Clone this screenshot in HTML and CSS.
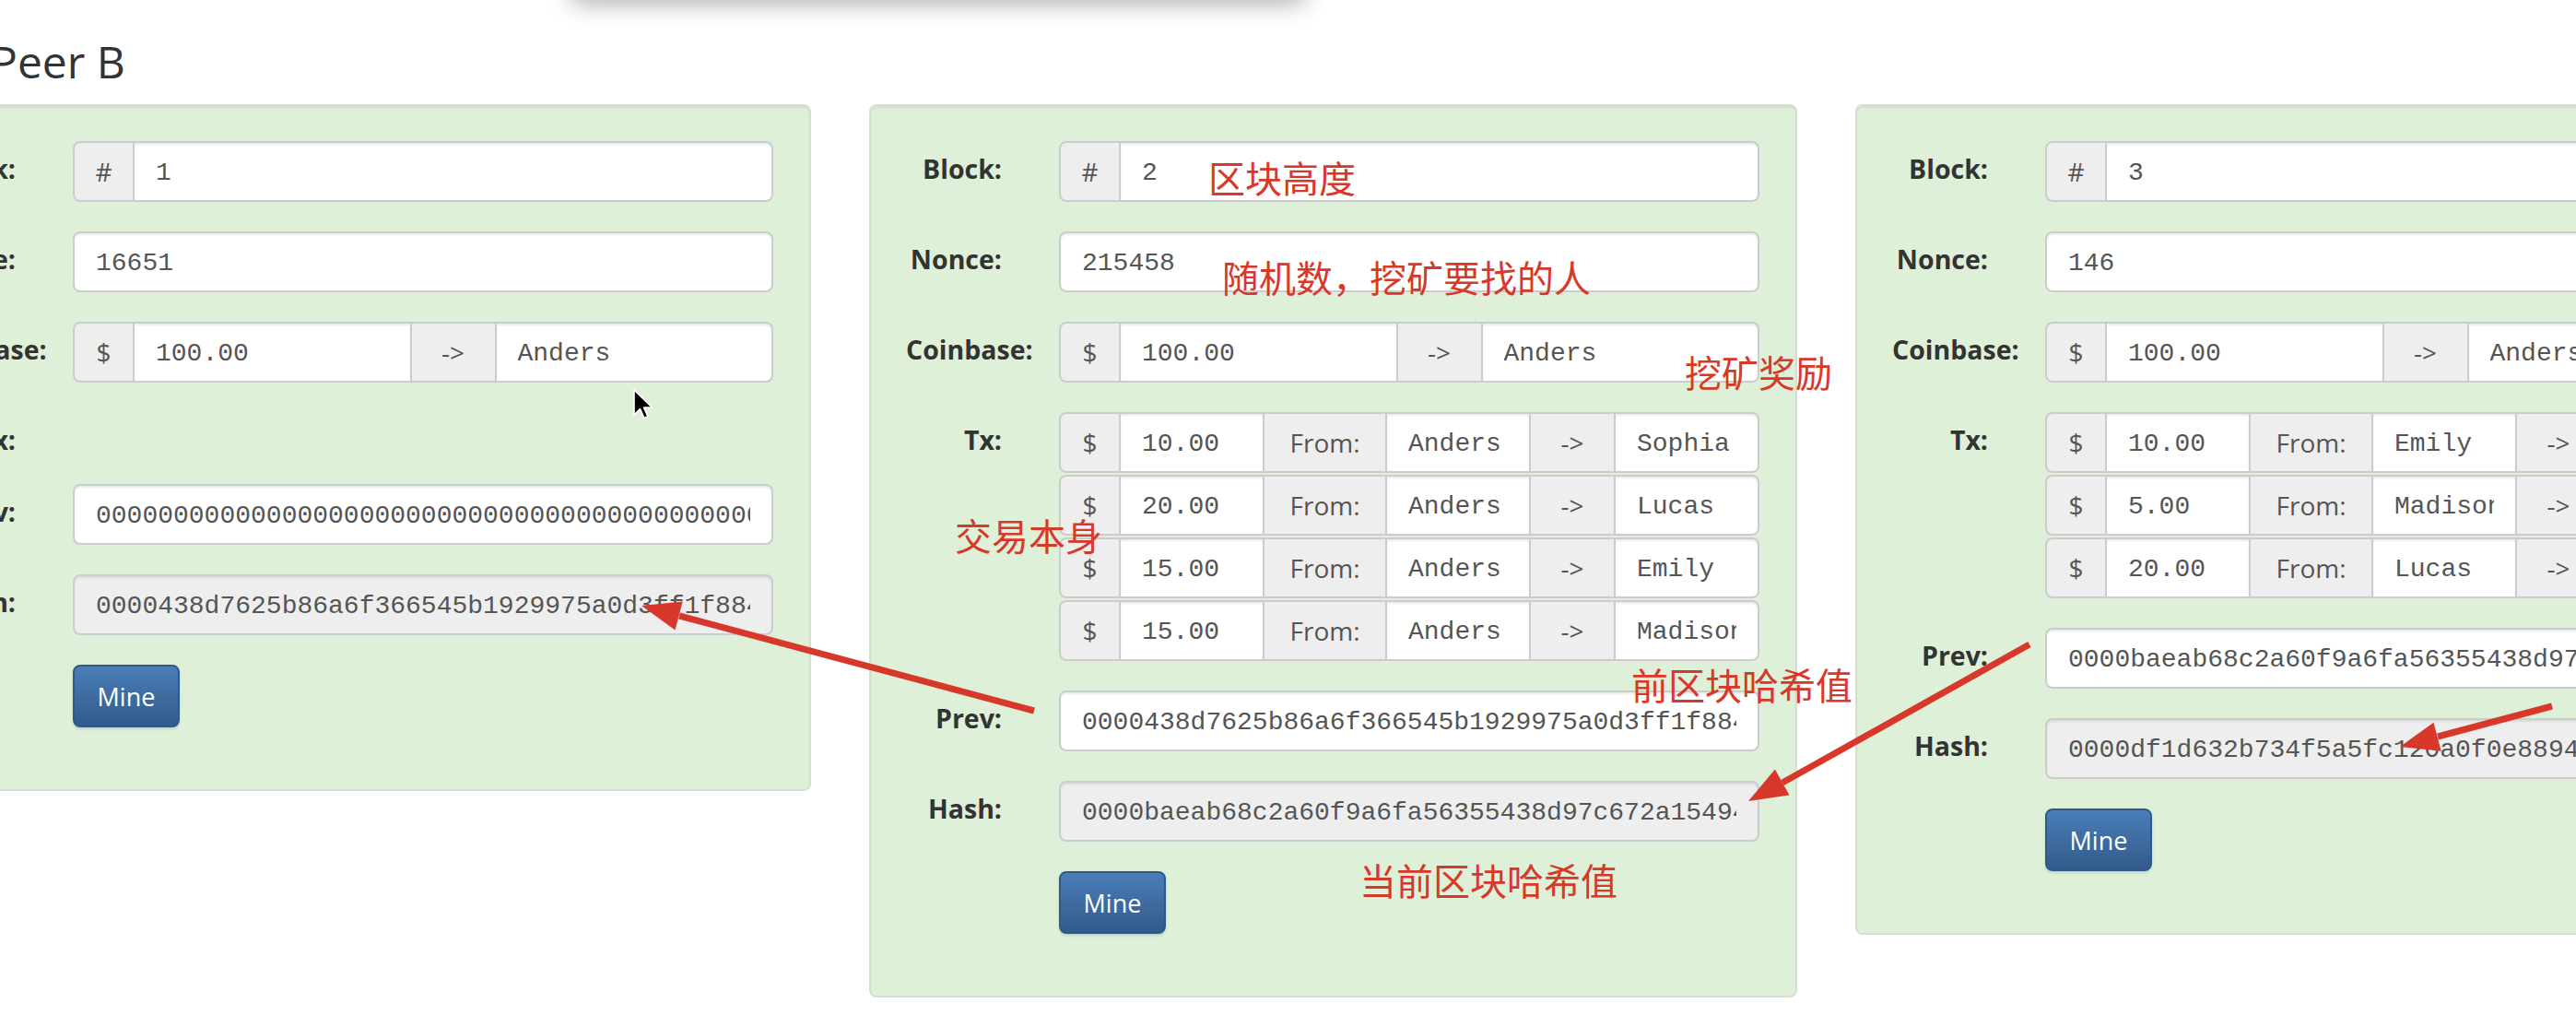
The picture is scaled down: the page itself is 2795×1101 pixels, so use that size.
FILE: index.html
```html
<!DOCTYPE html>
<html lang="zh">
<head>
<meta charset="utf-8">
<title>Peer B</title>
<link rel="stylesheet" href="styles.css">
</head>
<body>
<div class="popup-shadow"></div>
<div class="page">
  <h3 class="peer-title">Peer B</h3>
  <div class="blocks">
    <!-- Block 1 -->
    <div class="well">
      <div class="row"><div class="label">Block:</div>
        <div class="group"><span class="addon sym">#</span><input class="field" value="1" readonly></div></div>
      <div class="row"><div class="label">Nonce:</div>
        <div class="group"><input class="field single" value="16651" readonly></div></div>
      <div class="row"><div class="label">Coinbase:</div>
        <div class="group"><span class="addon sym">$</span><input class="field" value="100.00" readonly><span class="addon to">-&gt;</span><input class="field" value="Anders" readonly></div></div>
      <div class="row"><div class="label">Tx:</div><div class="txs"></div></div>
      <div class="row"><div class="label">Prev:</div>
        <div class="group"><input class="field single" value="0000000000000000000000000000000000000000000000000000000000000000" readonly></div></div>
      <div class="row"><div class="label">Hash:</div>
        <div class="group"><input class="field single ro" value="0000438d7625b86a6f366545b1929975a0d3ff1f8844d5c3e1a2b9f07d6c4e85" readonly></div></div>
      <div class="row"><div></div><div><button class="btn">Mine</button></div></div>
    </div>
    <!-- Block 2 -->
    <div class="well">
      <div class="row"><div class="label">Block:</div>
        <div class="group"><span class="addon sym">#</span><input class="field" value="2" readonly></div></div>
      <div class="row"><div class="label">Nonce:</div>
        <div class="group"><input class="field single" value="215458" readonly></div></div>
      <div class="row"><div class="label">Coinbase:</div>
        <div class="group"><span class="addon sym">$</span><input class="field" value="100.00" readonly><span class="addon to">-&gt;</span><input class="field" value="Anders" readonly></div></div>
      <div class="row"><div class="label">Tx:</div>
        <div class="txs">
          <div class="group"><span class="addon sym">$</span><input class="field" value="10.00" readonly><span class="addon from">From:</span><input class="field" value="Anders" readonly><span class="addon to">-&gt;</span><input class="field" value="Sophia" readonly></div>
          <div class="group"><span class="addon sym">$</span><input class="field" value="20.00" readonly><span class="addon from">From:</span><input class="field" value="Anders" readonly><span class="addon to">-&gt;</span><input class="field" value="Lucas" readonly></div>
          <div class="group"><span class="addon sym">$</span><input class="field" value="15.00" readonly><span class="addon from">From:</span><input class="field" value="Anders" readonly><span class="addon to">-&gt;</span><input class="field" value="Emily" readonly></div>
          <div class="group"><span class="addon sym">$</span><input class="field" value="15.00" readonly><span class="addon from">From:</span><input class="field" value="Anders" readonly><span class="addon to">-&gt;</span><input class="field" value="Madison" readonly></div>
        </div></div>
      <div class="row"><div class="label">Prev:</div>
        <div class="group"><input class="field single" value="0000438d7625b86a6f366545b1929975a0d3ff1f8844d5c3e1a2b9f07d6c4e85" readonly></div></div>
      <div class="row"><div class="label">Hash:</div>
        <div class="group"><input class="field single ro" value="0000baeab68c2a60f9a6fa56355438d97c672a15494e0d2b8f1c6a3e7d905b2f" readonly></div></div>
      <div class="row"><div></div><div><button class="btn">Mine</button></div></div>
    </div>
    <!-- Block 3 -->
    <div class="well">
      <div class="row"><div class="label">Block:</div>
        <div class="group"><span class="addon sym">#</span><input class="field" value="3" readonly></div></div>
      <div class="row"><div class="label">Nonce:</div>
        <div class="group"><input class="field single" value="146" readonly></div></div>
      <div class="row"><div class="label">Coinbase:</div>
        <div class="group"><span class="addon sym">$</span><input class="field" value="100.00" readonly><span class="addon to">-&gt;</span><input class="field" value="Anders" readonly></div></div>
      <div class="row"><div class="label">Tx:</div>
        <div class="txs">
          <div class="group"><span class="addon sym">$</span><input class="field" value="10.00" readonly><span class="addon from">From:</span><input class="field" value="Emily" readonly><span class="addon to">-&gt;</span><input class="field" value="Jackson" readonly></div>
          <div class="group"><span class="addon sym">$</span><input class="field" value="5.00" readonly><span class="addon from">From:</span><input class="field" value="Madison" readonly><span class="addon to">-&gt;</span><input class="field" value="Jackson" readonly></div>
          <div class="group"><span class="addon sym">$</span><input class="field" value="20.00" readonly><span class="addon from">From:</span><input class="field" value="Lucas" readonly><span class="addon to">-&gt;</span><input class="field" value="Grace" readonly></div>
        </div></div>
      <div class="row"><div class="label">Prev:</div>
        <div class="group"><input class="field single" value="0000baeab68c2a60f9a6fa56355438d97c672a15494e0d2b8f1c6a3e7d905b2f" readonly></div></div>
      <div class="row"><div class="label">Hash:</div>
        <div class="group"><input class="field single ro" value="0000df1d632b734f5a5fc120a0f0e88943b7c2d61e5f0a9d8c4b2e71f6a3d059" readonly></div></div>
      <div class="row"><div></div><div><button class="btn">Mine</button></div></div>
    </div>
  </div>
</div>

<div class="notes">
  <span class="note n1">区块高度</span>
  <span class="note n2">随机数，挖矿要找的人</span>
  <span class="note n3">挖矿奖励</span>
  <span class="note n4">交易本身</span>
  <span class="note n5">前区块哈希值</span>
  <span class="note n6">当前区块哈希值</span>
  <svg class="arrows" width="2795" height="1101" viewBox="0 0 2795 1101">
    <g stroke="#d7382a" stroke-width="7" fill="none">
      <line x1="1122" y1="771" x2="737" y2="668"/>
      <line x1="2202" y1="699" x2="1934" y2="849"/>
      <line x1="2769" y1="766" x2="2645" y2="799"/>
    </g>
    <g fill="#d7382a">
      <polygon points="696,657 740.7,652.4 732.5,683.4"/>
      <polygon points="1897,869 1941.5,862.6 1925.9,834.6"/>
      <polygon points="2604,810 2648.7,814.7 2640.5,783.7"/>
    </g>
  </svg>
  <svg class="cursor" width="24" height="36" viewBox="0 0 24 36">
    <path d="M2 2 L2 29 L8.5 22.5 L13 32.5 L17 30.8 L12.6 21 L21.5 21 Z" fill="#000" stroke="#fff" stroke-width="1.6" stroke-linejoin="round"/>
  </svg>
</div>
</body>
</html>
```

FILE: styles.css
```css
html, body {
  margin: 0;
  padding: 0;
  overflow: hidden;
  background: #ffffff;
}

body {
  width: 2795px;
  height: 1101px;
  position: relative;
  font-family: "Open Sans", "Liberation Sans", sans-serif;
  color: #333333;
}

.popup-shadow {
  position: absolute;
  left: 618px;
  top: -140px;
  width: 800px;
  height: 138px;
  border-radius: 14px;
  background: #ffffff;
  box-shadow: 0 6px 26px rgba(0, 0, 0, 0.32);
}

.page {
  margin-left: -127px;
  padding-top: 40px;
}

.peer-title {
  margin: 0 0 20px 117px;
  font-size: 48px;
  font-weight: 400;
  line-height: 53px;
  color: #333333;
}

.blocks {
  display: flex;
  gap: 63px;
  align-items: flex-start;
}

.well {
  flex: 0 0 1007px;
  box-sizing: border-box;
  background: #dff0d8;
  border: 2px solid #d2e2ca;
  border-radius: 8px;
  box-shadow: inset 0 2px 2px rgba(0, 0, 0, 0.07);
  padding: 38px 39px 67px 38px;
  display: flex;
  flex-direction: column;
  gap: 32px;
}

.row {
  display: grid;
  grid-template-columns: 104px 760px;
  column-gap: 62px;
  align-items: start;
}

.label {
  min-width: 0;
  text-align: right;
  white-space: nowrap;
  font-weight: 700;
  font-size: 28.5px;
  line-height: 32px;
  padding-top: 14px;
  color: #333333;
}

.txs {
  display: flex;
  flex-direction: column;
  gap: 2px;
}

.group {
  display: flex;
  height: 66px;
}

.addon,
.field {
  box-sizing: border-box;
  height: 66px;
  margin: 0;
  border: 2px solid #cccccc;
}

.group > * + * {
  border-left: 0;
}

.group > :first-child {
  border-radius: 8px 0 0 8px;
}

.group > :last-child {
  border-radius: 0 8px 8px 0;
}

.group > .single {
  border-radius: 8px;
}

.addon {
  flex: none;
  display: flex;
  align-items: center;
  justify-content: center;
  background: #eeeeee;
  color: #555555;
  font-family: "Open Sans", "Liberation Sans", sans-serif;
  font-size: 28px;
}

.addon.sym {
  width: 67px;
}

.addon.from {
  width: 133px;
}

.addon.to {
  width: 92px;
}

.field {
  flex: 1 1 0;
  width: 0;
  min-width: 0;
  padding: 2px 23px 0;
  background: #ffffff;
  color: #555555;
  font-family: "Liberation Mono", "Courier New", monospace;
  font-size: 28px;
  box-shadow: inset 0 2px 2px rgba(0, 0, 0, 0.075);
  outline: none;
}

.field.ro {
  background: #eeeeee;
}

.btn {
  display: block;
  width: 116px;
  height: 68px;
  box-sizing: border-box;
  margin: 0;
  padding: 0;
  border: 2px solid #2c5a8b;
  border-radius: 8px;
  background: linear-gradient(#4a7eb9, #325a8b);
  color: #ffffff;
  font-family: "Open Sans", "Liberation Sans", sans-serif;
  font-size: 27px;
  box-shadow: 0 2px 3px rgba(0, 0, 0, 0.12);
}

.notes {
  position: absolute;
  left: 0;
  top: 0;
  width: 2795px;
  height: 1101px;
  pointer-events: none;
}

.note {
  position: absolute;
  white-space: nowrap;
  font-family: "Noto Sans CJK SC", sans-serif;
  font-size: 40px;
  line-height: 40px;
  color: #d7382a;
}

.n1 { left: 1311px; top: 172px; }
.n2 { left: 1326px; top: 280px; }
.n3 { left: 1828px; top: 383px; }
.n4 { left: 1036px; top: 560px; }
.n5 { left: 1770px; top: 722px; }
.n6 { left: 1475px; top: 934px; }

.arrows {
  position: absolute;
  left: 0;
  top: 0;
}

.cursor {
  position: absolute;
  left: 686px;
  top: 421px;
}
```
